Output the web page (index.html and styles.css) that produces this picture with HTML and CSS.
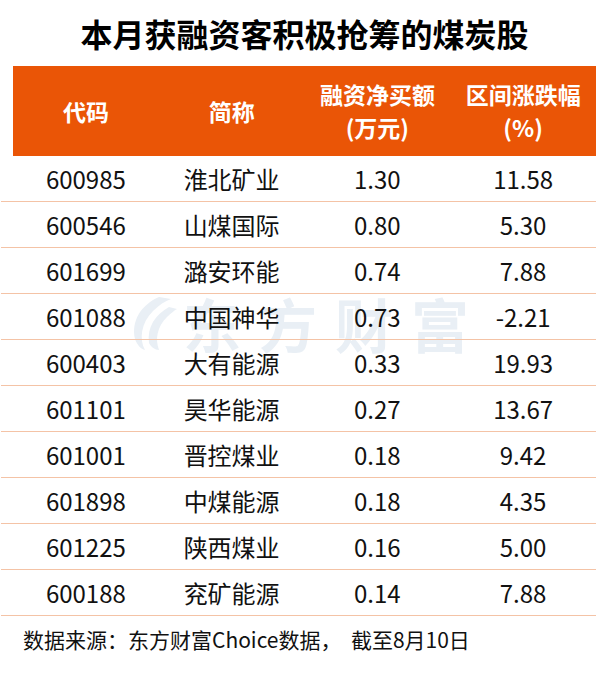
FILE: index.html
```html
<!DOCTYPE html>
<html lang="zh">
<head>
<meta charset="utf-8">
<link rel="stylesheet" href="styles.css">
</head>
<body>
<div class="page">
  <h1 class="title">本月获融资客积极抢筹的煤炭股</h1>
  <div class="table">
    <div class="head">
      <div class="hcell">代码</div>
      <div class="hcell">简称</div>
      <div class="hcell">融资净买额<br>(万元)</div>
      <div class="hcell">区间涨跌幅<br>(%)</div>
    </div>
    <div class="body">
      <div class="watermark">
        <svg class="wm-logo" width="48" height="56" viewBox="0 0 48 56">
          <path d="M30 2 C12 10 2 26 6 44 C8 50 12 54 16 55 C10 44 12 28 24 16 C30 10 36 6 42 4 Z" fill="#e9eff5"/>
          <path d="M40 12 C26 20 18 32 20 48 C22 52 26 55 30 55 C26 44 28 32 38 22 C42 18 46 15 48 14 Z" fill="#e9eff5"/>
        </svg>
        <span class="wm-text">东方财富</span>
      </div>
      <div class="row"><div>600985</div><div>淮北矿业</div><div>1.30</div><div>11.58</div></div>
      <div class="row"><div>600546</div><div>山煤国际</div><div>0.80</div><div>5.30</div></div>
      <div class="row"><div>601699</div><div>潞安环能</div><div>0.74</div><div>7.88</div></div>
      <div class="row"><div>601088</div><div>中国神华</div><div>0.73</div><div>-2.21</div></div>
      <div class="row"><div>600403</div><div>大有能源</div><div>0.33</div><div>19.93</div></div>
      <div class="row"><div>601101</div><div>昊华能源</div><div>0.27</div><div>13.67</div></div>
      <div class="row"><div>601001</div><div>晋控煤业</div><div>0.18</div><div>9.42</div></div>
      <div class="row"><div>601898</div><div>中煤能源</div><div>0.18</div><div>4.35</div></div>
      <div class="row"><div>601225</div><div>陕西煤业</div><div>0.16</div><div>5.00</div></div>
      <div class="row"><div>600188</div><div>兖矿能源</div><div>0.14</div><div>7.88</div></div>
    </div>
  </div>
  <p class="source">数据来源：东方财富Choice数据，&nbsp;&nbsp;截至8月10日</p>
</div>
</body>
</html>
```
FILE: styles.css
```css
html, body {
  margin: 0;
  padding: 0;
  background: #ffffff;
}
body {
  font-family: "Noto Sans CJK SC", "Noto Sans", sans-serif;
  color: #111111;
}
.page {
  width: 609px;
  height: 674px;
  overflow: hidden;
}
.title {
  margin: 0;
  height: 66px;
  line-height: 66px;
  font-size: 32px;
  font-weight: 700;
  text-align: center;
  color: #000000;
}
.table {
  margin-left: 1px;
  width: 595px;
}
.head {
  margin-left: 12px;
  height: 90px;
  background: #ea5506;
  display: grid;
  grid-template-columns: repeat(4, 1fr);
  align-items: center;
}
.hcell {
  color: #ffffff;
  font-weight: 700;
  font-size: 23px;
  line-height: 33px;
  text-align: center;
}
.body {
  position: relative;
}
.row {
  position: relative;
  z-index: 1;
  display: grid;
  grid-template-columns: repeat(4, 1fr);
  padding-left: 12px;
  height: 45px;
  align-items: center;
  border-bottom: 1px solid #f4c3a6;
  font-size: 24px;
  line-height: 30px;
  text-align: center;
  color: #111111;
}
.watermark {
  position: absolute;
  left: 128px;
  top: 137px;
  display: flex;
  align-items: center;
  gap: 6px;
  z-index: 0;
}
.wm-text {
  font-size: 58px;
  font-weight: 700;
  letter-spacing: 18px;
  color: #e9eff5;
  line-height: 60px;
}
.source {
  margin: 9px 0 0 23px;
  font-size: 21px;
  line-height: 28px;
  color: #111111;
}
```
